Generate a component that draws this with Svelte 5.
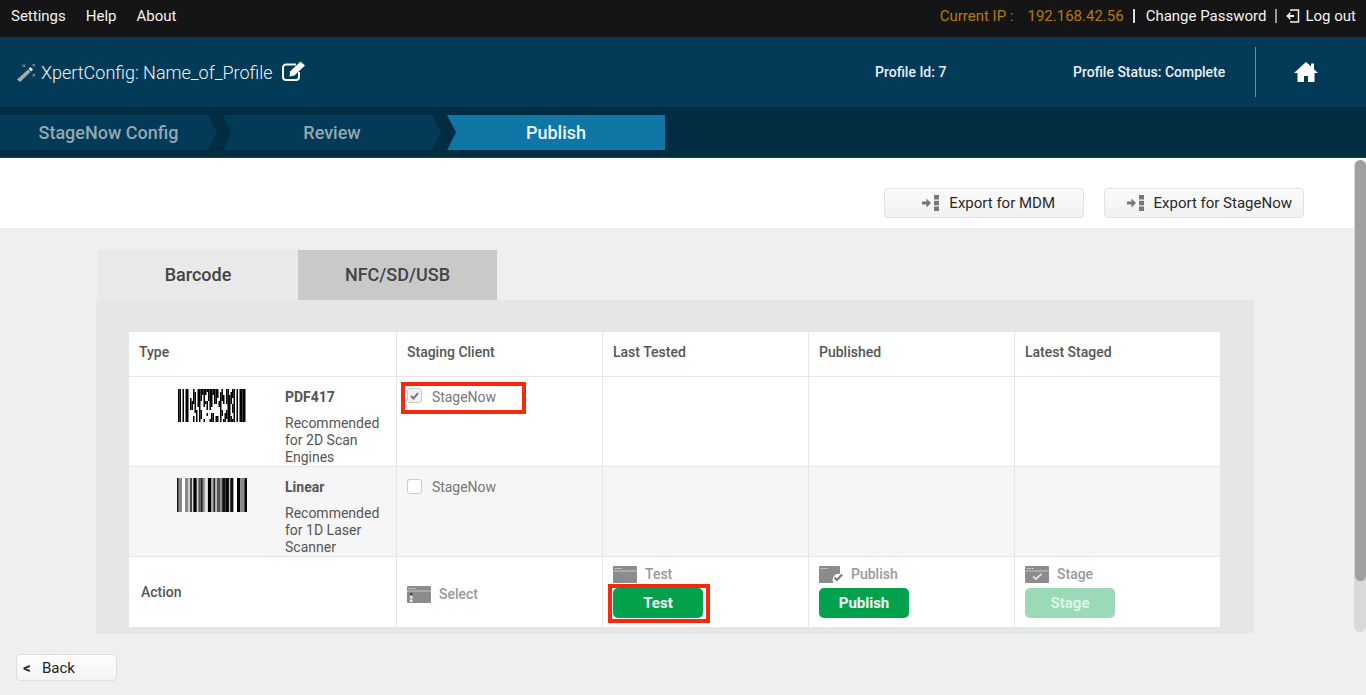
<script>
    // pseudo-random cells for the PDF417 picture, side columns are fixed
    const pdf_rows = 11;
    const pdf_cols = 45;
    const pdf_cells = [];
    const pdf_state = [];
    let seed = 23;
    for (let row = 0; row < pdf_rows; row++) {
        pdf_state[row] = [];
        for (let col = 0; col < pdf_cols; col++) {
            seed = (seed * 137 + 59) % 1009;
            let solid;
            if (col < 8) solid = [1, 1, 0, 1, 0, 1, 1, 0][col] === 1;
            else if (col > 37) solid = [0, 1, 0, 1, 1, 1, 1][col - 38] === 1;
            else if (row > 0 && seed % 100 < 62) solid = pdf_state[row - 1][col];
            else solid = seed % 9 < 5;
            pdf_state[row][col] = solid;
            if (solid) pdf_cells.push({ x: col * 1.5, y: row * 3 });
        }
    }

    // [width, gray] stripes of the linear barcode
    const linear_bars = [
        [1.7, "#111"], [3.3, "#888"], [3, "#fff"], [3.3, "#888"], [1.7, "#ccc"], [2, "#444"], [1.3, "#ddd"], [3.4, "#000"],
        [1.6, "#ccc"], [2.4, "#555"], [2, "#222"], [2, "#888"], [2, "#ddd"], [1, "#fff"], [3.6, "#000"], [2, "#aaa"],
        [2, "#222"], [1.4, "#ccc"], [3.3, "#555"], [2, "#888"], [3.4, "#111"], [3.3, "#000"], [1.3, "#bbb"], [3.4, "#111"],
        [3.3, "#fff"], [3.4, "#000"], [4, "#888"], [2.6, "#000"]
    ];
    let bar_x = 0;
    const bars = linear_bars.map(([w, c]) => {
        const bar = { x: bar_x, w, c };
        bar_x += w;
        return bar;
    });

    const headers = ["Staging Client", "Last Tested", "Published", "Latest Staged"];
</script>

<div class="page">
    <div class="topbar">
        <nav class="menu">
            <span>Settings</span><span>Help</span><span>About</span>
        </nav>
        <div class="session">
            <span class="ip">Current IP :</span>
            <span class="ip ip-value">192.168.42.56</span>
            <span class="bar bar-strong"></span>
            <span>Change Password</span>
            <span class="bar"></span>
            <svg class="logout-icon" width="14" height="14" viewBox="0 0 14 14" fill="none" stroke="#eee" stroke-width="1.5">
                <path d="M5 2V1h7.500v12H5v-1" />
                <path d="M1 7h7" stroke-width="2" />
                <path d="M4.500 3.800 1.200 7l3.300 3.200" />
            </svg>
            <span>Log out</span>
        </div>
    </div>

    <header class="profile">
        <div class="title">
            <svg width="20" height="20" viewBox="0 0 20 20">
                <path d="M11 7.500 13.500 10 3 20 0 17.500z" fill="#a3acb1" />
                <path d="M11.500 7 14 9.500 16 7.500 13.500 5z" fill="#e6e6e6" />
                <path d="M5.500 2.500l2.500 2.500M8 2.500l-2.500 2.500M15.500 2l2.500 2.500M18 2l-2.500 2.500M15.500 12l2.500 2.500M18 12l-2.500 2.500" stroke="#9fabb2" stroke-width=".9" />
            </svg>
            <span>XpertConfig: Name_of_Profile</span>
            <svg class="edit-icon" width="24" height="21" viewBox="0 0 24 21" fill="none">
                <path d="M14 4.500H4A3 3 0 0 0 1 7.500V17a3 3 0 0 0 3 3h10a3 3 0 0 0 3-3v-5" stroke="#f4f6f7" stroke-width="2" />
                <path d="M8 11.500 18.500 1.500 23 5.500 12.500 15.500 7.500 16.500z" fill="#f4f6f7" />
            </svg>
        </div>
        <div class="profile-id">Profile Id: 7</div>
        <div class="profile-status">Profile Status: Complete</div>
        <div class="home">
            <svg width="24" height="20" viewBox="0 0 24 20" fill="#fff">
                <path d="M12 0 0 11h3.500v9H10v-6h4v6h6.500v-9H24l-4-3.700V1.500h-3v3z" />
            </svg>
        </div>
    </header>

    <div class="steps">
        <div class="step step-first">StageNow Config</div>
        <div class="step step-mid">Review</div>
        <div class="step step-active">Publish</div>
    </div>

    <div class="content">
        <div class="export-row">
            <button class="export export-mdm">
                <svg class="export-icon" width="18" height="16" viewBox="0 0 18 16" fill="#777">
                    <path d="M0 6.500h4.500V3.500L9 8l-4.500 4.500v-3H0z" />
                    <rect x="12" y="0" width="5" height="4.500" /><rect x="12" y="5.800" width="5" height="4.500" /><rect x="12" y="11.500" width="5" height="4.500" />
                </svg>
                Export for MDM
            </button>
            <button class="export export-stagenow">
                <svg class="export-icon" width="18" height="16" viewBox="0 0 18 16" fill="#777">
                    <path d="M0 6.500h4.500V3.500L9 8l-4.500 4.500v-3H0z" />
                    <rect x="12" y="0" width="5" height="4.500" /><rect x="12" y="5.800" width="5" height="4.500" /><rect x="12" y="11.500" width="5" height="4.500" />
                </svg>
                Export for StageNow
            </button>
        </div>

        <div class="main">
            <div class="tabs">
                <div class="tab tab-active">Barcode</div>
                <div class="tab">NFC/SD/USB</div>
            </div>

            <div class="panel">
                <div class="grid">
                    <div class="cell head first">Type</div>
                    {#each headers as header}
                        <div class="cell head">{header}</div>
                    {/each}

                    <div class="cell first type-cell">
                        <div class="code-box pdf">
                            <svg width="68" height="33" viewBox="0 0 68 33">
                                {#each pdf_cells as c}
                                    <rect x={c.x} y={c.y} width="1.500" height="3" fill="#000" />
                                {/each}
                            </svg>
                        </div>
                        <div class="type-text">
                            <b>PDF417</b>
                            <p>Recommended for 2D Scan Engines</p>
                        </div>
                    </div>
                    <div class="cell client-cell">
                        <label class="client outlined">
                            <span class="check checked">
                                <svg width="9" height="8" viewBox="0 0 9 8" fill="none" stroke="#777" stroke-width="2"><path d="M1 4 3.500 6.500 8 1.200" /></svg>
                            </span>
                            <span class="client-name">StageNow</span>
                        </label>
                    </div>
                    <div class="cell"></div>
                    <div class="cell"></div>
                    <div class="cell"></div>

                    <div class="cell first type-cell alt">
                        <div class="code-box">
                            <svg width="70" height="34" viewBox="0 0 {bar_x} 34" preserveAspectRatio="none">
                                {#each bars as b}
                                    <rect x={b.x} y="0" width={b.w} height="34" fill={b.c} />
                                {/each}
                            </svg>
                        </div>
                        <div class="type-text">
                            <b>Linear</b>
                            <p>Recommended for 1D Laser Scanner</p>
                        </div>
                    </div>
                    <div class="cell client-cell alt">
                        <label class="client">
                            <span class="check"></span>
                            <span class="client-name">StageNow</span>
                        </label>
                    </div>
                    <div class="cell alt"></div>
                    <div class="cell alt"></div>
                    <div class="cell alt"></div>

                    <div class="cell first action-label">Action</div>
                    <div class="cell select-cell">
                        <span class="action-title">
                            <svg class="window" width="24" height="17" viewBox="0 0 24 17">
                                <rect width="24" height="17" rx="1" fill="#8c8c8c" />
                                <path d="M2 2.500h1.500M4.500 2.500H6M7 2.500h1.500" stroke="#ddd" />
                                <path d="M0 5h24" stroke="#eee" stroke-width=".6" />
                                <rect x="3" y="7" width="2.500" height="2" fill="#444" /><rect x="3" y="10" width="2.500" height="2.500" fill="#eee" /><rect x="3" y="13.500" width="2.500" height="2.500" fill="#eee" />
                            </svg>
                            Select
                        </span>
                    </div>
                    <div class="cell action-cell">
                        <span class="action-title">
                            <svg class="window" width="24" height="17" viewBox="0 0 24 17">
                                <rect width="24" height="17" rx="1" fill="#8c8c8c" />
                                <path d="M2 2.500h1.500M4.500 2.500H6M7 2.500h1.500" stroke="#ddd" />
                                <path d="M0 5h24" stroke="#eee" stroke-width=".6" />
                            </svg>
                            Test
                        </span>
                        <span class="outlined-btn"><button class="go">Test</button></span>
                    </div>
                    <div class="cell action-cell">
                        <span class="action-title">
                            <svg class="window" width="24" height="17" viewBox="0 0 24 17">
                                <path d="M1 0h19a1 1 0 0 1 1 1v7a6 6 0 0 0-7 8v1H1a1 1 0 0 1-1-1V1a1 1 0 0 1 1-1z" fill="#8c8c8c" />
                                <path d="M2 2.500h1.500M4.500 2.500H6M7 2.500h1.500" stroke="#ddd" />
                                <path d="M15.500 11.500 18 14l5-5.500" fill="none" stroke="#777" stroke-width="2" />
                            </svg>
                            Publish
                        </span>
                        <button class="go">Publish</button>
                    </div>
                    <div class="cell action-cell">
                        <span class="action-title">
                            <svg class="window" width="24" height="17" viewBox="0 0 24 17">
                                <rect width="24" height="17" rx="1" fill="#8c8c8c" />
                                <path d="M2 2.500h1.500M4.500 2.500H6M7 2.500h1.500" stroke="#ddd" />
                                <path d="M0 5h24" stroke="#eee" stroke-width=".6" />
                                <path d="M8 10.500 11 13 16.500 8" fill="none" stroke="#ddd" stroke-width="2" />
                            </svg>
                            Stage
                        </span>
                        <button class="go" disabled>Stage</button>
                    </div>
                </div>
            </div>

            <button class="back"><span class="lt">&lt;</span>Back</button>
        </div>
    </div>

    <div class="scrollbar"><div class="thumb"></div></div>
</div>

<style>
    :global(body) {
        margin: 0;
        overflow: hidden;
    }

    .page {
        position: relative;
        height: 695px;
        overflow: hidden;
        background: #efefef;
        font-family: Roboto, "Liberation Sans", sans-serif;
        font-size: 14px;
        color: #555;
    }

    /* top black bar */
    .topbar {
        height: 37px;
        box-sizing: border-box;
        padding: 0 10px 5px 11px;
        display: flex;
        align-items: center;
        justify-content: space-between;
        background: #151515;
        color: #f2f2f2;
        font-size: 15px;
    }

    .menu {
        display: flex;
        gap: 20px;
    }

    .session {
        display: flex;
        align-items: center;
    }

    .ip {
        color: #b47a10;
    }

    .ip-value {
        margin-left: 14px;
    }

    .bar {
        width: 2px;
        height: 14px;
        margin: 0 9px 0 9px;
        background: #999;
    }

    .bar-strong {
        background: #ddd;
        margin: 0 11px 0 9px;
    }

    .logout-icon {
        margin-right: 5px;
    }

    /* profile header */
    .profile {
        height: 70px;
        display: flex;
        align-items: center;
        background: #023a57;
        color: #e8eef1;
    }

    .title {
        width: 875px;
        box-sizing: border-box;
        padding-left: 17px;
        display: flex;
        align-items: center;
        font-size: 18px;
        font-weight: 300;
        color: #f0f4f6;
    }

    .title span {
        margin-left: 4px;
    }

    .edit-icon {
        margin: -3px 0 0 9px;
    }

    .profile-id {
        width: 198px;
        font-size: 14px;
        font-weight: 500;
    }

    .profile-status {
        width: 182px;
        font-size: 14px;
        font-weight: 500;
    }

    .home {
        height: 50px;
        width: 111px;
        box-sizing: border-box;
        border-left: 1px solid #6f8d9c;
        padding-right: 11px;
        display: flex;
        align-items: center;
        justify-content: center;
    }

    /* wizard steps */
    .steps {
        height: 51px;
        box-sizing: border-box;
        padding-top: 8px;
        display: flex;
        align-items: flex-start;
        background: #012c42;
        border-bottom: 1px solid #1d4154;
    }

    .step {
        height: 35px;
        display: flex;
        align-items: center;
        justify-content: center;
        font-size: 18px;
        font-weight: 500;
        color: #93a8b4;
        background: #023a57;
    }

    .step-first {
        width: 217px;
        clip-path: polygon(0 0, 208px 0, 100% 50%, 208px 100%, 0 100%);
    }

    .step-mid {
        width: 218px;
        margin-left: 6px;
        clip-path: polygon(0 0, 209px 0, 100% 50%, 209px 100%, 0 100%, 8px 50%);
    }

    .step-active {
        width: 218px;
        margin-left: 6px;
        background: #0f76a6;
        color: #eef5f9;
        clip-path: polygon(0 0, 100% 0, 100% 100%, 0 100%, 9px 50%);
    }

    /* page body */
    .content {
        display: flex;
        flex-direction: column;
    }

    .export-row {
        height: 70px;
        box-sizing: border-box;
        padding: 30px 62px 0 0;
        display: flex;
        justify-content: flex-end;
        gap: 20px;
        background: #fff;
    }

    .export {
        height: 30px;
        padding: 0;
        display: flex;
        align-items: center;
        justify-content: flex-end;
        border: 1px solid #e2e2e2;
        border-radius: 4px;
        background: linear-gradient(#fbfbfb, #f1f1f1);
        font: 400 15px Roboto, "Liberation Sans", sans-serif;
        color: #2a2a2a;
    }

    .export-mdm {
        width: 200px;
        padding-right: 28px;
    }

    .export-stagenow {
        width: 200px;
        padding-right: 11px;
    }

    .export-icon {
        margin-right: 9px;
    }

    .main {
        padding: 22px 0 0 96px;
    }

    .tabs {
        height: 50px;
        padding-left: 2px;
        display: flex;
    }

    .tab {
        width: 199px;
        box-sizing: border-box;
        padding-bottom: 2px;
        display: flex;
        align-items: center;
        justify-content: center;
        background: #c9c9c9;
        font-size: 18px;
        font-weight: 500;
        color: #444;
    }

    .tab-active {
        width: 200px;
        background: #e9e9ea;
    }

    .panel {
        height: 334px;
        box-sizing: border-box;
        padding: 32px 33px 0 33px;
        width: 1158px;
        background: #e5e6e8;
    }

    .grid {
        display: grid;
        grid-template-columns: 267px repeat(4, 206px);
        grid-template-rows: 45px 90px 90px 70px;
        width: 1091px;
        background: #fff;
    }

    .cell {
        box-sizing: border-box;
        border-left: 1px solid #e6e6e6;
        border-bottom: 1px solid #e6e6e6;
        background: #fff;
        font-size: 14px;
        color: #555;
    }

    .grid > .cell:nth-last-child(-n + 5) {
        border-bottom: 0;
    }

    .first {
        border-left: 0;
    }

    .head {
        padding: 12px 10px 0;
        font-size: 14px;
        font-weight: 500;
    }

    .alt {
        background: #f6f6f6;
    }

    .type-cell {
        display: flex;
    }

    .code-box {
        width: 156px;
        padding: 11px 0 0 48px;
        box-sizing: border-box;
    }

    .code-box.pdf {
        padding: 12px 0 0 49px;
    }

    .code-box svg {
        display: block;
    }

    .type-text {
        width: 100px;
        padding-top: 12px;
    }

    .type-text b {
        display: block;
        font-size: 14px;
        font-weight: 700;
        line-height: 17px;
    }

    .type-text p {
        margin: 9px 0 0;
        line-height: 17px;
        font-size: 14px;
    }

    .client-cell {
        padding: 10px 0 0 10px;
    }

    .client {
        display: flex;
        align-items: center;
        height: 19px;
        line-height: 15px;
        letter-spacing: -.05px;
        color: #777;
    }

    .client-name {
        position: relative;
        top: 1px;
    }

    .client.outlined {
        width: 125px;
        height: 32px;
        box-sizing: border-box;
        margin: -5px 0 0 -6px;
        padding: 2px 0 0 2px;
        align-items: flex-start;
        border: 4px solid #f6290c;
    }

    .outlined .client-name {
        top: 2px;
    }

    .check {
        flex: none;
        width: 13px;
        height: 13px;
        margin-right: 10px;
        display: flex;
        align-items: center;
        justify-content: center;
        border: 1px solid #ccc;
        border-radius: 3px;
        background: #fff;
    }

    .check.checked {
        background: #f2f2f2;
    }

    .action-label {
        padding: 27px 0 0 12px;
        font-size: 14px;
        font-weight: 500;
    }

    .select-cell {
        padding: 28px 0 0 10px;
    }

    .action-title {
        display: flex;
        align-items: center;
        font-size: 14px;
        font-weight: 500;
        color: #999;
        height: 17px;
    }

    .window {
        margin: 2px 8px 0 0;
    }

    .action-cell {
        padding: 8px 0 0 10px;
    }

    .go {
        display: block;
        width: 90px;
        height: 30px;
        margin-top: 6px;
        padding: 0;
        border: 0;
        border-radius: 5px;
        background: #02a24c;
        font: 700 15px Roboto, "Liberation Sans", sans-serif;
        color: #f4fbf7;
    }

    .go:disabled {
        background: #9adab7;
        color: #dff3e8;
    }

    .outlined-btn {
        display: block;
        width: 102px;
        height: 39px;
        box-sizing: border-box;
        margin: 2px 0 0 -5px;
        padding: 0 0 0 1px;
        border: 4px solid #f6290c;
    }

    .outlined-btn .go {
        margin: 0;
    }

    .back {
        width: 101px;
        height: 27px;
        margin: 20px 0 0 -80px;
        padding: 0 0 0 6px;
        display: flex;
        align-items: center;
        border: 1px solid #dedede;
        border-radius: 4px;
        background: linear-gradient(#fdfdfd, #f3f3f3);
        font: 400 15px Roboto, "Liberation Sans", sans-serif;
        color: #222;
    }

    .lt {
        width: 19px;
        text-align: left;
        font-weight: 700;
    }

    /* window scrollbar, sits over the page */
    .scrollbar {
        position: absolute;
        top: 160px;
        right: 0;
        width: 12px;
        height: 472px;
        border-radius: 6px;
        background: #d9d9d9;
    }

    .thumb {
        width: 11px;
        height: 421px;
        margin-left: 1px;
        border-radius: 6px;
        background: #a0a0a0;
    }
</style>
